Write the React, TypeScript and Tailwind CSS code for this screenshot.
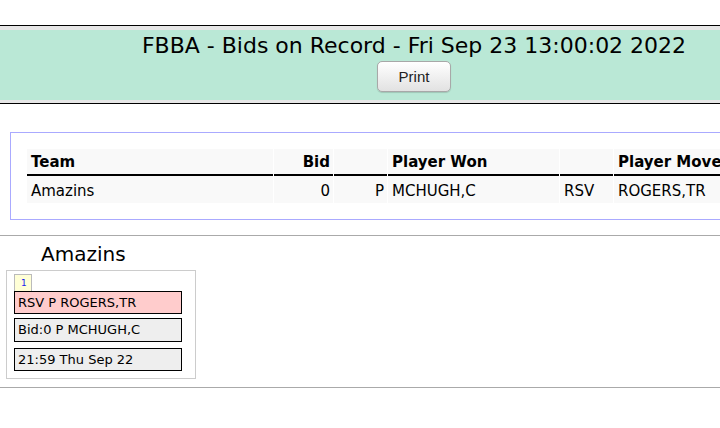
export default function App() {
  const cols = [
    { w: "w-[246px]", align: "text-left" },
    { w: "w-[59px]", align: "text-right" },
    { w: "w-[53px]", align: "text-right" },
    { w: "w-[171px]", align: "text-left" },
    { w: "w-[53px]", align: "text-left" },
    { w: "w-[170px]", align: "text-left" },
  ];
  const head = ["Team", "Bid", "", "Player Won", "", "Player Moved"];
  const row = ["Amazins", "0", "P", "MCHUGH,C", "RSV", "ROGERS,TR"];
  return (
    <div className="w-[720px] h-[428px] overflow-hidden bg-white text-black font-['DejaVu_Sans',Verdana,sans-serif]">
      <div className="w-[828px]">
        <div className="h-[25px]" />
        <div className="border-y border-black bg-[#e6e6e6] pt-[4px] pb-[3px]">
          <div className="h-[70px] bg-[#bae8d6] flex flex-col items-center pt-[3px]">
            <div className="text-[22px] leading-[26px] whitespace-nowrap">
              FBBA - Bids on Record - Fri Sep 23 13:00:02 2022
            </div>
            <button className="mt-[2px] h-[31px] w-[74px] rounded-[5px] border border-[#a8a8a8] bg-gradient-to-b from-white to-[#e2e2e2] shadow-[0_1px_1px_rgba(0,0,0,0.15)] font-['Liberation_Sans',Arial,sans-serif] text-[15px] text-[#222] leading-none">
              Print
            </button>
          </div>
        </div>

        <div className="mt-[28px] ml-[10px] w-[800px] border border-[#aaaaff] p-[16px]">
          <div className="flex gap-[1px]">
            {head.map((h, i) => (
              <div
                key={i}
                className={`${cols[i].w} ${cols[i].align} h-[27px] border-b-2 border-black bg-[#f9f9f9] pt-[2px] px-[4px] pr-[3px] text-[15px] font-bold leading-[23px] whitespace-nowrap`}
              >
                {h}
              </div>
            ))}
          </div>
          <div className="flex gap-[1px]">
            {row.map((c, i) => (
              <div
                key={i}
                className={`${cols[i].w} ${cols[i].align} h-[27px] bg-[#f9f9f9] pt-[3px] px-[4px] pr-[3px] text-[15px] leading-[24px] whitespace-nowrap`}
              >
                {c}
              </div>
            ))}
          </div>
        </div>

        <div className="mt-[15px] h-px bg-[#aaaaaa]" />
        <div className="mt-[7px] pl-[41px] text-[20px] leading-[23px]">Amazins</div>
        <div className="mt-[4px] ml-[6px] w-[190px] border border-[#cccccc] pt-[3px] px-[7px] pb-[7px]">
          <div className="w-[18px] h-[17px] border-t border-x border-[#bbbbbb] bg-[#ffffd6] text-[9px] leading-[16px] text-[#2222ee] pl-[6px]">
            1
          </div>
          <div className="w-[168px] h-[23px] border border-black bg-[#ffcccc] text-[13px] leading-[21px] pl-[3px] whitespace-nowrap">
            RSV P ROGERS,TR
          </div>
          <div className="mt-[4px] w-[168px] h-[24px] border border-black bg-[#eeeeee] text-[13px] leading-[22px] pl-[3px] whitespace-nowrap">
            Bid:0 P MCHUGH,C
          </div>
          <div className="mt-[6px] w-[168px] h-[23px] border border-black bg-[#eeeeee] text-[13px] leading-[21px] pl-[3px] whitespace-nowrap">
            21:59 Thu Sep 22
          </div>
        </div>
        <div className="mt-[8px] h-px bg-[#aaaaaa]" />
      </div>
    </div>
  );
}
